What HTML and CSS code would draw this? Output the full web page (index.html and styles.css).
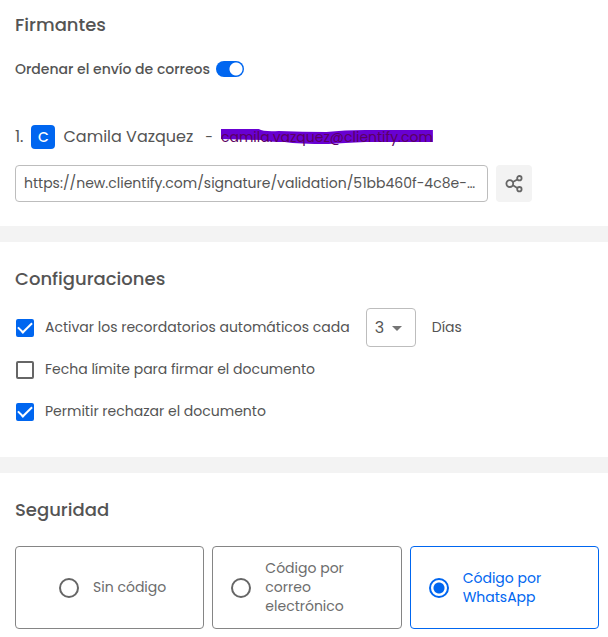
FILE: index.html
```html
<!DOCTYPE html>
<html lang="es">
<head>
<meta charset="utf-8">
<meta name="viewport" content="width=device-width, initial-scale=1">
<title>Firmantes</title>
<link rel="stylesheet" href="styles.css">
</head>
<body>
<main>
  <section class="section section-first">
    <h2 class="title">Firmantes</h2>
    <div class="order">
      <label for="order">Ordenar el envío de correos</label>
      <input class="switch" type="checkbox" role="switch" id="order" checked>
    </div>
    <div class="signer">
      <span class="number">1.</span>
      <span class="avatar">C</span>
      <span class="name">Camila Vazquez</span>
      <span class="dash">-</span>
      <span class="email">
        <svg class="marker" viewBox="0 0 213 17" preserveAspectRatio="none" aria-hidden="true"><path d="M0 1H38Q43 4 58 3Q82 4 106 4Q124 2 145 2H213V14H145Q124 15 108 16Q78 16 64 14Q48 14 40 12L0 11Z" fill="#6800d2"/></svg>
        <span class="email-text">camila.vazquez@clientify.com</span>
      </span>
    </div>
    <div class="link-row">
      <input class="link" type="text" aria-label="Enlace de firma" readonly value="https://new.clientify.com/signature/validation/51bb460f-4c8e-4b7a-9d21">
      <button class="share" type="button" aria-label="Compartir">
        <svg width="18" height="18" viewBox="0 0 18 18" fill="none" stroke="#666" stroke-width="1.8" aria-hidden="true"><circle cx="4.8" cy="8.6" r="3.4"/><circle cx="14.4" cy="3.2" r="2.2"/><circle cx="14.4" cy="14.2" r="2.2"/><path d="M7.9 7L12.3 4.5M7.9 10.3L12.3 13"/></svg>
      </button>
    </div>
  </section>

  <section class="section section-settings">
    <h2 class="title">Configuraciones</h2>
    <div class="settings">
      <div class="setting">
        <input class="check" type="checkbox" id="remind" checked>
        <label for="remind">Activar los recordatorios automáticos cada</label>
        <span class="select-wrap">
          <select class="days" id="days" aria-label="Días entre recordatorios"><option>1</option><option>2</option><option selected>3</option></select>
        </span>
        <label for="days">Días</label>
      </div>
      <div class="setting">
        <input class="check" type="checkbox" id="limit">
        <label for="limit">Fecha límite para firmar el documento</label>
      </div>
      <div class="setting">
        <input class="check" type="checkbox" id="reject" checked>
        <label for="reject">Permitir rechazar el documento</label>
      </div>
    </div>
  </section>

  <section class="section section-security">
    <h2 class="title">Seguridad</h2>
    <div class="cards">
      <label class="card"><input class="radio" type="radio" name="security"><span>Sin código</span></label>
      <label class="card"><input class="radio" type="radio" name="security"><span>Código por correo electrónico</span></label>
      <label class="card"><input class="radio" type="radio" name="security" checked><span>Código por WhatsApp</span></label>
    </div>
  </section>
</main>
</body>
</html>
```
FILE: styles.css
```css
* {
  box-sizing: border-box;
}

body {
  margin: 0;
  background: #fff;
  color: #545454;
  font-family: Poppins, Inter, sans-serif;
  font-size: 14px;
  line-height: 24px;
}

input,
select,
button {
  margin: 0;
  font: inherit;
  color: inherit;
}

.section {
  padding: 23px 9px 24px 15px;
}

.section + .section {
  border-top: 16px solid #f3f3f3;
}

.section-first {
  padding-top: 11px;
}

.section-settings {
  padding-bottom: 33px;
}

.section-security {
  padding-bottom: 8px;
}

.title {
  margin: 0;
  font-size: 18px;
  font-weight: 500;
  line-height: 28px;
}

.order {
  display: flex;
  align-items: center;
  gap: 6px;
  margin-top: 18px;
}

.order label {
  font-weight: 500;
}

.switch {
  appearance: none;
  width: 28px;
  height: 16px;
  border-radius: 8px;
  background: radial-gradient(circle at 20px 8px, #fff 6px, transparent 7px) #0066f0;
}

.signer {
  display: flex;
  align-items: center;
  margin-top: 44px;
  font-size: 16px;
}

.avatar {
  width: 24px;
  margin: 0 8px;
  border-radius: 4px;
  background: #0066f0;
  color: #fff;
  font-size: 14px;
  font-weight: 500;
  text-align: center;
}

.dash {
  margin: 0 8px 0 12px;
  font-size: 14px;
}

.email {
  position: relative;
  font-size: 14px;
}

.email-text {
  position: relative;
  color: #5b0062;
}

.marker {
  position: absolute;
  left: 0;
  top: 3px;
  width: 100%;
  height: 17px;
}

.link-row {
  display: flex;
  gap: 8px;
  margin-top: 16px;
}

.link {
  flex: 0 1 473px;
  min-width: 0;
  height: 37px;
  padding: 0 8px;
  border: 1px solid #bdbdbd;
  border-radius: 4px;
  background: #fff;
  text-overflow: ellipsis;
}

.share {
  display: grid;
  place-items: center;
  flex: none;
  width: 36px;
  height: 37px;
  padding: 0;
  border: 0;
  border-radius: 4px;
  background: #f3f3f3;
}

.settings {
  display: grid;
  gap: 18px;
  margin-top: 8px;
}

.setting {
  display: flex;
  align-items: center;
}

.setting:first-child {
  height: 39px;
  margin: 7px 0 -7px;
}

.setting label {
  padding-bottom: 2px;
  line-height: 22px;
}

.check {
  appearance: none;
  flex: none;
  width: 18px;
  height: 18px;
  margin: 0 11px 0 1px;
  border: 2px solid #666;
  border-radius: 2px;
}

.check:checked {
  display: grid;
  place-items: center;
  border-color: #0066f0;
  background: #0066f0;
}

.check:checked::before {
  content: "";
  width: 12px;
  height: 6px;
  margin-top: -4px;
  border: solid #fff;
  border-width: 0 0 2px 2px;
  transform: rotate(-45deg);
}

.select-wrap {
  position: relative;
  margin: 0 16px;
}

.select-wrap::after {
  content: "";
  position: absolute;
  top: 18px;
  right: 14px;
  border: 5px solid transparent;
  border-top-color: #757575;
  border-bottom: 0;
  pointer-events: none;
}

.days {
  appearance: none;
  display: block;
  width: 50px;
  height: 39px;
  padding: 0 8px;
  border: 1px solid #bdbdbd;
  border-radius: 4px;
  background: #fff;
  font-size: 16px;
}

.cards {
  display: grid;
  grid-template-columns: repeat(3, 1fr);
  gap: 8px;
  margin-top: 22px;
}

.card {
  display: flex;
  align-items: center;
  justify-content: center;
  gap: 14px;
  min-height: 83px;
  padding: 12px 12px 12px 18px;
  border: 1px solid #858585;
  border-radius: 4px;
  color: #6c6c6c;
  line-height: 19px;
}

.card:has(:checked) {
  border-color: #0066f0;
  color: #0066f0;
}

.radio {
  appearance: none;
  flex: none;
  width: 20px;
  height: 20px;
  border: 2px solid #666;
  border-radius: 50%;
}

.radio:checked {
  border-color: #0066f0;
  background: radial-gradient(circle, #0066f0 5px, transparent 6px);
}
```
